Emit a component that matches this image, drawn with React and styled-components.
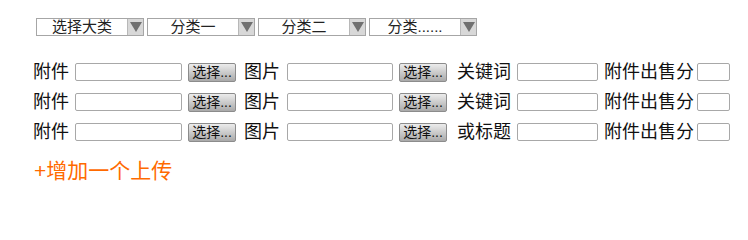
import React from "react";
import styled, { createGlobalStyle } from "styled-components";

const Global = createGlobalStyle`
  html, body { margin: 0; padding: 0; background: #fff; }
  body { font-family: "Liberation Sans", "Noto Sans CJK SC", sans-serif; color: #111; }
`;

const Page = styled.div`
  width: 748px;
  height: 200px;
  padding: 18px 0 0 33px;
  box-sizing: border-box;
  overflow: hidden;
`;

const SelectBar = styled.div`
  display: flex;
  gap: 3px;
  padding-left: 3px;
  margin-bottom: 21px;
`;

const SelectBox = styled.div`
  width: 108px;
  height: 18px;
  box-sizing: border-box;
  border: 1px solid #a6a6a6;
  display: flex;
  align-items: stretch;
  background: #fff;
`;

const SelectText = styled.span`
  flex: 1;
  text-align: center;
  font-size: 15px;
  line-height: 16px;
  color: #222;
  white-space: nowrap;
`;

const Arrow = styled.span`
  width: 15px;
  background: #d8d8d8;
  border-left: 1px solid #b8b8b8;
  display: flex;
  align-items: center;
  justify-content: center;
  &::after {
    content: "";
    border-left: 6px solid transparent;
    border-right: 6px solid transparent;
    border-top: 10px solid #707070;
  }
`;

const Rows = styled.div`
  display: flex;
  flex-direction: column;
`;

const Row = styled.div`
  display: flex;
  align-items: center;
  height: 30px;
`;

const Label = styled.span`
  font-size: 18px;
  line-height: 20px;
  margin-right: ${(p) => p.$mr ?? 6}px;
  white-space: nowrap;
  color: #111;
`;

const TextInput = styled.input`
  width: ${(p) => p.$w}px;
  height: 18px;
  box-sizing: border-box;
  border: 1px solid #a8a8a8;
  border-radius: 2px;
  padding: 0;
  margin: 0 ${(p) => p.$mr ?? 6}px 0 0;
  background: #fff;
`;

const Button = styled.button`
  width: 48px;
  height: 19px;
  box-sizing: border-box;
  padding: 0;
  margin: 0 ${(p) => p.$mr ?? 8}px 0 0;
  border: 1px solid #8c8c8c;
  border-radius: 2px;
  background: linear-gradient(#ececec, #a9a9a9);
  font-family: "Liberation Sans", "Noto Sans CJK SC", sans-serif;
  font-size: 14px;
  line-height: 16px;
  color: #111;
  white-space: nowrap;
  overflow: hidden;
`;

const AddLink = styled.a`
  display: inline-block;
  margin: 11px 0 0 1px;
  font-size: 21px;
  line-height: 26px;
  color: #ff6a00;
  text-decoration: none;
`;

const selects = ["选择大类", "分类一", "分类二", "分类......"];
const rows = [
  { a: "附件", b: "图片", c: "关键词" },
  { a: "附件", b: "图片", c: "关键词" },
  { a: "附件", b: "图片", c: "或标题" },
];

export default function App() {
  return (
    <>
      <Global />
      <Page>
        <SelectBar>
          {selects.map((s) => (
            <SelectBox key={s}>
              <SelectText>{s}</SelectText>
              <Arrow />
            </SelectBox>
          ))}
        </SelectBar>
        <Rows>
          {rows.map((r, i) => (
            <Row key={i}>
              <Label $mr={6}>{r.a}</Label>
              <TextInput $w={107} $mr={6} />
              <Button $mr={8}>选择...</Button>
              <Label $mr={7}>{r.b}</Label>
              <TextInput $w={106} $mr={6} />
              <Button $mr={10}>选择...</Button>
              <Label $mr={6}>{r.c}</Label>
              <TextInput $w={81} $mr={6} />
              <Label $mr={3}>附件出售分</Label>
              <TextInput $w={33} $mr={0} />
            </Row>
          ))}
        </Rows>
        <AddLink href="#">+增加一个上传</AddLink>
      </Page>
    </>
  );
}
